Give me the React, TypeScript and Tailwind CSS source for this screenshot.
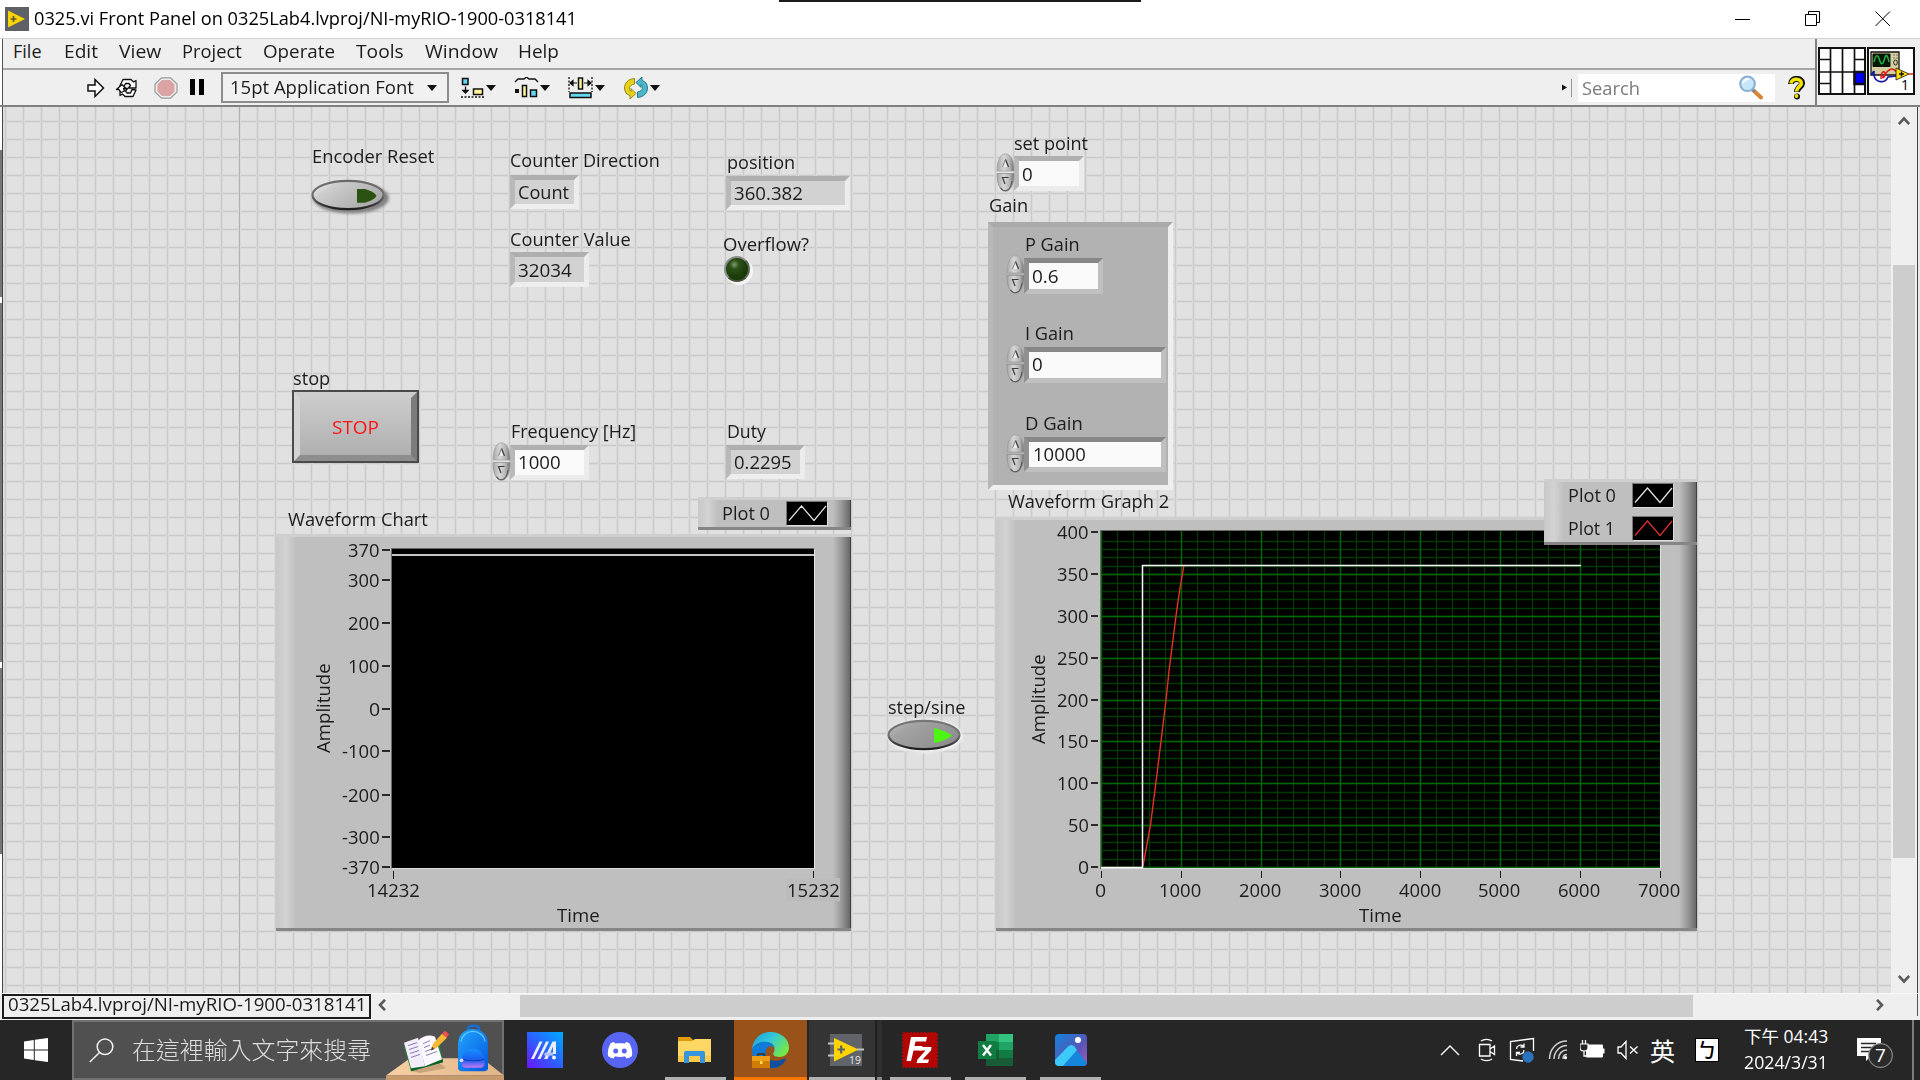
import { useLayoutEffect, useRef, useState, type ReactNode } from "react";

/** One line of text, squeezed or stretched horizontally to an exact width. */
function Fit({ w, className = "", children }: { w: number; className?: string; children: ReactNode }) {
  const ref = useRef<HTMLSpanElement>(null);
  const [scale, setScale] = useState(1);
  useLayoutEffect(() => {
    if (ref.current) setScale(w / ref.current.offsetWidth);
  }, [w]);
  return (
    <span className={`block whitespace-nowrap ${className}`} style={{ width: w }}>
      <span ref={ref} className="inline-block origin-left" style={{ transform: `scaleX(${scale})` }}>
        {children}
      </span>
    </span>
  );
}

type Item = { t: string; x: number; base: number; w: number; c?: string };

/** Canvas text: x is the left ink edge, base the baseline. */
function CanvasText({ t, x, base, w, c = "text-[#1c1c1c]" }: Item) {
  return (
    <div className={`absolute text-[18px] leading-[24px] ${c}`} style={{ left: x - 0.4, top: base - 19 }}>
      <Fit w={w + 1.4}>{t}</Fit>
    </div>
  );
}

const labels: Item[] = [
  { t: "Encoder Reset", x: 312, base: 163, w: 121 },
  { t: "Counter Direction", x: 510, base: 167, w: 148 },
  { t: "position", x: 727, base: 169, w: 67 },
  { t: "Counter Value", x: 510, base: 246, w: 119 },
  { t: "Overflow?", x: 723, base: 251, w: 85 },
  { t: "stop", x: 293, base: 385, w: 36 },
  { t: "Frequency [Hz]", x: 511, base: 438, w: 124 },
  { t: "Duty", x: 727, base: 438, w: 38 },
  { t: "Waveform Chart", x: 288, base: 526, w: 138 },
  { t: "step/sine", x: 888, base: 714, w: 76 },
  { t: "set point", x: 1014, base: 150, w: 73 },
  { t: "Gain", x: 989, base: 212, w: 38 },
  { t: "Waveform Graph 2", x: 1008, base: 508, w: 160 },
];

type Field = { x: number; y: number; w: number; h: number; v: string; vx: number; base: number; vw: number };

const indicators: Field[] = [
  { x: 510, y: 175, w: 69, h: 34, v: "Count", vx: 518, base: 199, vw: 50 },
  { x: 726, y: 176, w: 124, h: 34, v: "360.382", vx: 734, base: 200, vw: 67 },
  { x: 510, y: 252, w: 79, h: 35, v: "32034", vx: 518, base: 277, vw: 52 },
  { x: 726, y: 445, w: 79, h: 34, v: "0.2295", vx: 734, base: 469, vw: 56 },
];

const controls: Field[] = [
  { x: 510, y: 445, w: 79, h: 35, v: "1000", vx: 518, base: 469, vw: 41 },
  { x: 1014, y: 156, w: 70, h: 35, v: "0", vx: 1022, base: 181, vw: 9 },
];

const gains: (Field & { label: string; lw: number; lb: number })[] = [
  { label: "P Gain", lw: 53, lb: 251, x: 1024, y: 258, w: 79, h: 36, v: "0.6", vx: 1032, base: 283, vw: 25 },
  { label: "I Gain", lw: 47, lb: 340, x: 1024, y: 347, w: 142, h: 36, v: "0", vx: 1032, base: 371, vw: 9 },
  { label: "D Gain", lw: 56, lb: 430, x: 1024, y: 437, w: 142, h: 35, v: "10000", vx: 1033, base: 461, vw: 51 },
];

function Spinner({ x, y }: { x: number; y: number }) {
  return (
    <svg className="absolute h-[39px] w-[19px]" style={{ left: x, top: y }} viewBox="0 0 19 39">
      <defs>
        <linearGradient id="spin" x1="0" x2="1">
          <stop offset="0" stopColor="#a8a8a8" />
          <stop offset=".4" stopColor="#d6d6d6" />
          <stop offset=".75" stopColor="#b4b4b4" />
          <stop offset="1" stopColor="#6f6f6f" />
        </linearGradient>
      </defs>
      <path d="M1 18C1 8 4 .8 9.500.8S18 8 18 18Z" fill="url(#spin)" stroke="#999" strokeWidth=".6" />
      <path d="M1 20.500C1 31 4 38.200 9.500 38.200S18 31 18 20.500Z" fill="url(#spin)" stroke="#8d8d8d" strokeWidth=".7" />
      <path d="M16 28c-1 6-3 9.500-6.500 9.700c-2.500 0-4-1.500-5-3" fill="none" stroke="#555" strokeWidth="1.100" />
      <path d="M9.500 6.500L12.500 14H6.500Z" fill="#ececec" />
      <path d="M9.500 6.500L12.500 14" stroke="#3c3c3c" strokeWidth="1.300" />
      <path d="M6.500 14L9.500 6.500" stroke="#777" strokeWidth=".9" />
      <path d="M6.500 24.500H12.500L9.500 31Z" fill="#cfcfcf" />
      <path d="M12.500 24.500H6.500L9 31" fill="none" stroke="#3c3c3c" strokeWidth="1.200" />
    </svg>
  );
}

function Recess({ f, kind }: { f: Field; kind: "indicator" | "control" | "gain" }) {
  const look = {
    indicator: "border-t-[#afafaf] border-l-[#b9b9b9] border-r-[#ececec] border-b-[#eeeeee] bg-[#d2d2d2]",
    control: "border-t-[#b0b0b0] border-l-[#b9b9b9] border-r-[#ececec] border-b-[#ececec] bg-[#fafafa]",
    gain: "border-t-[#878787] border-l-[#919191] border-r-[#c0c0c0] border-b-[#c0c0c0] bg-[#fafafa]",
  }[kind];
  return (
    <>
      <div className={`absolute border-[5px] ${look}`} style={{ left: f.x, top: f.y, width: f.w, height: f.h }} />
      <CanvasText t={f.v} x={f.vx} base={f.base} w={f.vw} />
      {kind !== "indicator" && <Spinner x={f.x - 18} y={f.y - 3} />}
    </>
  );
}

function OvalButton({ on }: { on: boolean }) {
  const id = on ? "ovalOn" : "ovalOff";
  return (
    <svg className="h-[40px] w-[86px]" viewBox="0 0 86 40">
      <defs>
        <linearGradient id={id} x1="0" y1="0" x2="1" y2="0.6">
          <stop offset="0" stopColor={on ? "#c4c4c4" : "#f4f4f4"} />
          <stop offset=".3" stopColor={on ? "#a3a3a3" : "#cdcdcd"} />
          <stop offset="1" stopColor={on ? "#8e8e8e" : "#a9a9a9"} />
        </linearGradient>
        <linearGradient id={id + "Edge"} x1="0" y1="0" x2="0" y2="1">
          <stop offset="0" stopColor={on ? "#777" : "#6a6a6a"} />
          <stop offset=".5" stopColor="#707070" />
          <stop offset="1" stopColor="#1e1e1e" />
        </linearGradient>
        <filter id={id + "Blur"}>
          <feGaussianBlur stdDeviation="1.6" />
        </filter>
      </defs>
      {on ? (
        <ellipse cx="42" cy="20" rx="37.500" ry="16.500" fill="#f6f6f6" filter={`url(#${id}Blur)`} />
      ) : (
        <ellipse cx="44" cy="22" rx="38" ry="15.500" fill="#828282" filter={`url(#${id}Blur)`} />
      )}
      <ellipse cx="41" cy="19" rx="35.500" ry="14.200" fill={`url(#${id})`} stroke={`url(#${id}Edge)`} strokeWidth="2.200" />
      {on ? (
        <path d="M51 12C57 13 66 17 69 19.500C66 22.500 58 26 51 27Z" fill="#4cf512" />
      ) : (
        <path d="M50 13H57C62 13.500 68 17 69.500 19.700C68 23 62 26 57 26.800H50Z" fill="#2a5212" />
      )}
    </svg>
  );
}

/** Raised metal frame behind graphs and legends. */
function Frame({ x, y, w, h }: { x: number; y: number; w: number; h: number }) {
  return (
    <div
      className="absolute flex justify-between border-t-[3px] border-b-[3px] border-t-[#cfcfcf] border-b-[#868686] bg-[#bfbfbf]"
      style={{ left: x, top: y, width: w, height: h }}
    >
      <div className="w-[20px] bg-linear-to-r from-[#c8c8c8] via-[#d3d3d3] to-[#bfbfbf]" />
      <div className="w-[18px] border-r border-[#404040] bg-linear-to-r from-[#bfbfbf] via-[#999999] to-[#696969]" />
    </div>
  );
}

function Swatch({ x, y, color }: { x: number; y: number; color: string }) {
  return (
    <svg className="absolute h-[25px] w-[42px] border border-t-[#777] border-r-[#ddd] border-b-[#ddd] border-l-[#777] bg-black" style={{ left: x, top: y }} viewBox="0 0 40 23">
      <path d="M2 18.500L14.500 4L27 18.500L39 4" fill="none" stroke={color} strokeWidth="1.200" />
    </svg>
  );
}

function VerticalTitle({ x, y }: { x: number; y: number }) {
  return (
    <div className="absolute h-[24px] w-[90px] origin-top-left -rotate-90 text-[18px] leading-[24px] text-[#1c1c1c]" style={{ left: x, top: y }}>
      <Fit w={90}>Amplitude</Fit>
    </div>
  );
}

const chartY = [
  { v: "370", y: 550 },
  { v: "300", y: 580 },
  { v: "200", y: 623 },
  { v: "100", y: 666 },
  { v: "0", y: 709 },
  { v: "-100", y: 751 },
  { v: "-200", y: 795 },
  { v: "-300", y: 837 },
  { v: "-370", y: 867 },
];
const numberWidth = (v: string) => v.replace("-", "").length * 10.4 + (v.startsWith("-") ? 6.5 : 0) - 1;

function WaveformChart() {
  return (
    <>
      <Frame x={276} y={534} w={575} h={397} />
      <div className="absolute top-[548px] left-[391px] h-[321px] w-[424px] border-t border-r border-b border-l border-t-[#6b6b6b] border-r-[#e6e6e6] border-b-[#dedede] border-l-[#6b6b6b] bg-black pt-[5px]">
        <div className="h-[2px] bg-[#c4c4c4]" />
      </div>
      {chartY.map(({ v, y }) => (
        <div key={v}>
          <div className="absolute left-[382px] h-[2px] w-[8px] bg-[#2a2a2a]" style={{ top: y - 1 }} />
          <CanvasText t={v} x={379 - numberWidth(v)} base={y + 7} w={numberWidth(v)} />
        </div>
      ))}
      <div className="absolute top-[871px] left-[393px] h-[8px] w-px bg-[#1a1a1a]" />
      <div className="absolute top-[871px] left-[813px] h-[8px] w-px bg-[#1a1a1a]" />
      <CanvasText t="14232" x={367} base={897} w={51} />
      <div className="absolute top-[878px] left-[786px] h-[23px] w-[54px] bg-[#bcbcbc]" />
      <CanvasText t="15232" x={787} base={897} w={51} />
      <CanvasText t="Time" x={557} base={922} w={41} />
      <VerticalTitle x={311} y={753} />
      <Frame x={698} y={497} w={153} h={33} />
      <CanvasText t="Plot 0" x={722} base={520} w={47} />
      <Swatch x={786} y={501} color="#e8e8e8" />
    </>
  );
}

const range = (n: number) => Array.from({ length: n }, (_, i) => i);
const gx = (v: number) => Math.round(1101 + v * 0.0798) + 0.5 - 1100;
const gy = (v: number) => Math.round(867 - v * 0.8367) + 0.5 - 530;

function WaveformGraph() {
  return (
    <>
      <Frame x={996} y={517} w={701} h={414} />
      <svg className="absolute top-[530px] left-[1100px] h-[339px] w-[561px] bg-black" viewBox="0 0 561 339">
        {range(40).map((i) => (
          <path key={i} d={`M0 ${gy(i * 10)}H561`} stroke="#003a00" strokeWidth="1.300" />
        ))}
        {range(35).map((i) => (
          <path key={i} d={`M${gx(i * 200)} 0V338`} stroke="#003a00" strokeWidth="1.300" />
        ))}
        {range(8).map((i) => (
          <path key={i} d={`M0 ${gy(i * 50)}H561M${gx(i * 1000)} 0V338`} stroke="#006600" strokeWidth="1.400" />
        ))}
        <path d="M0 338.500H561" stroke="#d9d9d9" />
        <path d="M560.500 0V339" stroke="#dcdcdc" />
        <path d="M0 .5H561M.5 0V339" stroke="#6b6b6b" />
        <path d="M43 336L47 314L50.500 295L56.500 248L66 170L69 141L76.500 82L80 58L84 35" fill="none" stroke="#e8302c" strokeWidth="1.400" />
        <path d="M1 337.500H42.500V35.500H481" fill="none" stroke="#f8f8f8" strokeWidth="1.500" />
      </svg>
      {range(9).map((i) => {
        const v = String(i * 50);
        const y = Math.round(867 - i * 41.84);
        return (
          <div key={v}>
            <div className="absolute left-[1091px] h-[2px] w-[7px] bg-[#2a2a2a]" style={{ top: y - 1 }} />
            <CanvasText t={v} x={1088 - numberWidth(v)} base={y + 7} w={numberWidth(v)} />
          </div>
        );
      })}
      {range(8).map((i) => {
        const v = String(i * 1000);
        const x = 1101 + i * 79.8;
        return (
          <div key={v}>
            <div className="absolute top-[871px] h-[7px] w-px bg-[#1a1a1a]" style={{ left: Math.round(x) }} />
            <CanvasText t={v} x={x - numberWidth(v) / 2 - 1} base={897} w={numberWidth(v)} />
          </div>
        );
      })}
      <CanvasText t="Time" x={1359} base={922} w={41} />
      <VerticalTitle x={1026} y={744} />
      <Frame x={1544} y={479} w={153} h={66} />
      <CanvasText t="Plot 0" x={1568} base={502} w={47} />
      <Swatch x={1632} y={483} color="#e8e8e8" />
      <CanvasText t="Plot 1" x={1568} base={535} w={46} />
      <Swatch x={1632} y={516} color="#e03030" />
    </>
  );
}

function FrontPanel() {
  return (
    <div className="relative w-[1888px] overflow-hidden bg-[#e1e1e1]">
      <div className="absolute -top-[107px] -left-[3px] h-[1100px] w-[1920px]">
        <div className="absolute inset-0 bg-[linear-gradient(to_right,#dadada_1px,#cacaca_1px,#cacaca_2px,#dadada_2px,#dadada_3px,transparent_3px),linear-gradient(to_bottom,#dadada_1px,#cacaca_1px,#cacaca_2px,#dadada_2px,#dadada_3px,transparent_3px)] bg-[size:18px_18px] bg-[position:4px_12px]" />
        <div className="absolute top-0 left-[239px] h-full w-px bg-[#b2b2b2]" />

        {labels.map((l) => (
          <CanvasText key={l.t} {...l} />
        ))}
        {indicators.map((f) => (
          <Recess key={f.v} f={f} kind="indicator" />
        ))}
        {controls.map((f) => (
          <Recess key={f.v} f={f} kind="control" />
        ))}

        <div className="absolute top-[176px] left-[307px]">
          <OvalButton on={false} />
        </div>
        <div className="absolute top-[716px] left-[883px]">
          <OvalButton on />
        </div>

        <div className="absolute top-[257px] left-[725px] h-[28px] w-[28px] rounded-full bg-[#f4f4f4]" />
        <div className="absolute top-[256px] left-[724px] h-[26px] w-[26px] rounded-full border-2 border-[#8c8c8c] border-r-[#5c6a55] border-b-[#44523c] bg-[radial-gradient(circle_at_38%_30%,#7f9a72_0%,#2c5218_22%,#1d3f0b_55%,#123003_100%)]" />

        <div className="absolute top-[390px] left-[292px] flex h-[73px] w-[127px] items-stretch border-2 border-[#4a4a4a] bg-[#bdbdbd]">
          <div className="flex-1 border-[6px] border-t-[#cdcdcd] border-r-[#7c7c7c] border-b-[#8e8e8e] border-l-[#d3d3d3] bg-linear-to-b from-[#cbcbcb] to-[#b0b0b0]" />
        </div>
        <CanvasText t="STOP" x={332} base={434} w={46} c="text-[#ff1414]" />

        <div className="absolute top-[222px] left-[988px] h-[268px] w-[185px] border-[5px] border-t-[#aaaaaa] border-r-[#efefef] border-b-[#efefef] border-l-[#b8b8b8] bg-[#b2b2b2]" />
        {gains.map((g) => (
          <div key={g.label}>
            <CanvasText t={g.label} x={1025} base={g.lb} w={g.lw} />
            <Recess f={g} kind="gain" />
          </div>
        ))}

        <WaveformChart />
        <WaveformGraph />
      </div>
    </div>
  );
}

/* ---------- window chrome ---------- */

function TitleBar() {
  return (
    <div className="relative flex h-[38px] items-center bg-white pr-[29px] pl-[5px]">
      <div className="absolute top-0 left-[779px] h-[2px] w-[362px] bg-[#1b1b1b]" />
      <svg className="mb-px h-[24px] w-[24px]" viewBox="0 0 24 24">
        <path d="M0 0H24V24H0Z" fill="#5e6166" />
        <path d="M3 3.500L20 12L3 20.500Z" fill="#ffd400" />
        <path d="M5.500 12H11.500M8.500 9V15" stroke="#5b5a35" strokeWidth="1.700" />
      </svg>
      <Fit w={543} className="mb-[2px] ml-[5px] text-[18px] leading-[24px] text-black">
        0325.vi Front Panel on 0325Lab4.lvproj/NI-myRIO-1900-0318141
      </Fit>
      <div className="ml-auto flex items-center gap-[54px] text-black">
        <svg className="h-[16px] w-[16px]" viewBox="0 0 16 16">
          <path d="M0 8.500H15" stroke="currentColor" />
        </svg>
        <svg className="h-[16px] w-[16px]" viewBox="0 0 16 16" fill="none" stroke="currentColor">
          <path d="M.5 3.500H11.500V14.500H.5ZM3.500 3.500V.5H14.500V11.500H11.500" />
        </svg>
        <svg className="h-[16px] w-[16px]" viewBox="0 0 16 16" stroke="currentColor">
          <path d="M.5.5L15 15M15 .5L.5 15" />
        </svg>
      </div>
    </div>
  );
}

const menu = [
  { t: "File", w: 29, g: "ml-[10px]" },
  { t: "Edit", w: 34, g: "ml-[22px]" },
  { t: "View", w: 42, g: "ml-[21px]" },
  { t: "Project", w: 60, g: "ml-[21px]" },
  { t: "Operate", w: 72, g: "ml-[21px]" },
  { t: "Tools", w: 48, g: "ml-[21px]" },
  { t: "Window", w: 73, g: "ml-[21px]" },
  { t: "Help", w: 41, g: "ml-[20px]" },
];

const Caret = ({ className = "" }: { className?: string }) => (
  <svg className={`h-[6px] w-[10px] ${className}`} viewBox="0 0 10 6">
    <path d="M0 0H10L5 6Z" fill="#111" />
  </svg>
);

function Toolbar() {
  return (
    <div className="flex h-[35px] items-center pl-[84px]">
      <svg className="h-[22px] w-[18px]" viewBox="0 0 18 22">
        <path d="M1 8H8V2.500L16.500 11L8 19.500V14H1Z" fill="#fff" stroke="#111" strokeWidth="1.500" />
      </svg>
      <svg className="ml-[10px] h-[22px] w-[26px]" viewBox="0 0 26 22">
        <g fill="#fff" stroke="#111" strokeWidth="1.300" strokeLinejoin="round">
          <path d="M5 8.500L8 2.500H16L18.500 5L21 3.500V11H13.500L15.500 8.500L14 6.500H10.500L9 9.500Z" />
          <path d="M21 13L18 19.500H10L7.500 17L5 18.500V11.500H12.500L10.500 14L12 16H15.500L17 12.500Z" />
          <path d="M1.500 12.500L7 7.500L11 11.500H8.500L9.500 14L6 15.500L4 12.500Z" />
        </g>
      </svg>
      <svg className="ml-[13px] h-[22px] w-[24px]" viewBox="0 0 24 22">
        <path d="M7.500.8H16.500L23 7V15L16.500 21.200H7.500L1 15V7Z" fill="#ededed" stroke="#999" strokeWidth="1.200" />
        <path d="M8 3H16L20.500 7.500V14.500L16 19H8L3.500 14.500V7.500Z" fill="#dca3a4" />
      </svg>
      <div className="mb-[2px] ml-[12px] flex gap-[4px]">
        <div className="h-[16px] w-[5px] bg-black" />
        <div className="h-[16px] w-[5px] bg-black" />
      </div>
      <div className="ml-[17px] flex h-[31px] w-[228px] items-center justify-between border-2 border-[#8c8c8c] bg-[#f1f1f1] pr-[10px] pl-[7px]">
        <Fit w={184} className="mb-[2px] text-[18px] leading-[24px] text-[#1c1c1c]">
          15pt Application Font
        </Fit>
        <Caret />
      </div>
      <svg className="ml-[12px] h-[22px] w-[23px]" viewBox="0 0 23 22">
        <path d="M1.500 1.500H7V7.500H1.500Z" fill="#66d5ee" stroke="#111" strokeWidth="1.500" />
        <path d="M12.500 12H21.500V17.500H12.500Z" fill="#fff59b" stroke="#111" strokeWidth="1.500" />
        <path d="M4.500 9.500V15M2 13.500L4.500 16L7 13.500Z" stroke="#111" fill="#111" strokeWidth="1.300" />
        <path d="M0 20H23" stroke="#111" strokeWidth="1.600" strokeDasharray="2 1.500" />
      </svg>
      <Caret className="ml-[2px]" />
      <svg className="ml-[18px] h-[22px] w-[25px]" viewBox="0 0 25 22">
        <path d="M1 5L4 2H10L12.500 0L15 2H21L24 5" fill="none" stroke="#111" strokeWidth="1.400" />
        <path d="M1 12H5V16H1Z" fill="#111" />
        <path d="M8.500 8.500H12.500V19.500H8.500Z" fill="#fff59b" stroke="#111" strokeWidth="1.500" />
        <path d="M16.500 13H22.500V19.500H16.500Z" fill="#66d5ee" stroke="#111" strokeWidth="1.500" />
      </svg>
      <Caret className="ml-px" />
      <svg className="ml-[18px] h-[22px] w-[25px]" viewBox="0 0 25 22">
        <path d="M1 0V15M24 0V15" stroke="#111" strokeWidth="1.300" strokeDasharray="2 1.500" />
        <path d="M10.500 1H14.500V12H10.500Z" fill="#fff59b" stroke="#111" strokeWidth="1.500" />
        <path d="M2 6H9M16 6H23M5 3.500L2 6L5 8.500ZM20 3.500L23 6L20 8.500Z" stroke="#111" fill="#111" strokeWidth="1.200" />
        <path d="M2 16H23V20.500H2Z" fill="#66d5ee" stroke="#111" strokeWidth="1.500" />
      </svg>
      <Caret className="ml-[2px]" />
      <svg className="ml-[18px] h-[24px] w-[26px]" viewBox="0 0 26 24">
        <path d="M11.500 2.500C5 3 1.500 7 1.500 12C1.500 16 3.500 18.500 7 19.500V23L13 17.500L8 12.500V15.500C5.500 13.500 6 9 11.500 8Z" fill="#e6d21c" stroke="#8b7d10" strokeWidth=".9" />
        <path d="M14.500 21.500C21 21 24.500 17 24.500 12C24.500 8 22.500 5.500 19 4.500V1L13 6.500L18 11.500V8.500C20.500 10.500 20 15 14.500 16Z" fill="#4bb5c9" stroke="#1d6f80" strokeWidth=".9" />
      </svg>
      <Caret className="ml-px" />

      <div className="ml-auto flex items-center">
        <svg className="h-[20px] w-[10px]" viewBox="0 0 10 20">
          <path d="M0 6.500L5 9.500L0 12.500Z" fill="#111" />
          <path d="M9.500 1V19" stroke="#999" />
        </svg>
        <div className="ml-[6px] flex h-[28px] w-[197px] items-center justify-between bg-white pr-[11px] pl-[4px]">
          <Fit w={58} className="text-[18px] leading-[24px] text-[#7b7b7b]">
            Search
          </Fit>
          <svg className="h-[25px] w-[26px]" viewBox="0 0 26 25">
            <path d="M15 15L23 22.500" stroke="#d98436" strokeWidth="4" strokeLinecap="round" />
            <path d="M14 14L17 17" stroke="#7d8a99" strokeWidth="2.500" />
            <circle cx="9.500" cy="8.800" r="7.300" fill="#c7e6fa" stroke="#88aed0" strokeWidth="2" />
            <path d="M5 8C6 5 8 4 11 4" stroke="#fff" strokeWidth="2" fill="none" />
          </svg>
        </div>
        <svg className="mr-[10px] ml-[13px] h-[24px] w-[17px]" viewBox="0 0 17 24">
          <path d="M3 8C3 1 14.500 1.500 14 7.500C13.500 11 9 11.500 9 16" fill="none" stroke="#111" strokeWidth="6" />
          <circle cx="9" cy="20.500" r="3" fill="#111" />
          <path d="M3 7.500C3.500 1.500 13.800 2 13.300 7.500C13 10.500 8.500 11 8.500 15.500" fill="none" stroke="#f5e400" strokeWidth="3.600" />
          <circle cx="8.500" cy="20" r="1.900" fill="#f5e400" />
        </svg>
      </div>
    </div>
  );
}

function ConnectorPane() {
  return (
    <div className="flex h-[66px] w-[105px] shrink-0 gap-px border-l-2 border-[#808080] pt-[8px] pl-px">
      <svg className="h-[48px] w-[48px]" viewBox="0 0 48 48">
        <path d="M1 1H47V47H1Z" fill="#fff" stroke="#111" strokeWidth="2" />
        <path d="M12.500 1V47M24.500 1V47M36.500 1V47M1 12.500H12.500M36.500 12.500H47M1 25H47M1 36.500H12.500M36.500 36.500H47" stroke="#111" strokeWidth="1.700" />
        <path d="M36.500 25H47V37H36.500Z" fill="#0000ff" stroke="#111" strokeWidth="2.500" />
      </svg>
      <div className="relative h-[48px] w-[48px] border-2 border-[#111] bg-white">
        <svg className="h-[44px] w-[44px]" viewBox="0 0 44 44">
          <path d="M2 3H30V26H2Z" fill="#d5cfa0" stroke="#111" strokeWidth="1.300" />
          <path d="M4 5H21V17.500H4Z" fill="#001800" stroke="#111" />
          <path d="M5 13C7 4 9 6 10.500 11S14 16 15.500 10S18.500 6 20 13" fill="none" stroke="#27b04b" strokeWidth="1.500" />
          <path d="M24 6H29M24 9H29" stroke="#777" strokeDasharray="2 1" />
          <ellipse cx="26.500" cy="13.500" rx="1.800" ry="2.500" fill="none" stroke="#222" />
          <path d="M2 26L5 22M5 22V26C6 34 16 35 19 28L28 27" fill="none" stroke="#1717a0" strokeWidth="1.700" />
          <path d="M12 30C12 20 17 22 16 26S11 30 17 24S24 20 28 23" fill="none" stroke="#e01818" strokeWidth="1.500" />
          <path d="M27 19L40 25L27 31Z" fill="#ffe000" stroke="#111" strokeWidth=".8" />
          <path d="M30 25H35M32.500 22.500V27.500" stroke="#111" strokeWidth="1.400" />
          <path d="M40 25H44" stroke="#e01818" strokeWidth="1.400" />
        </svg>
        <span className="absolute right-[4px] bottom-[-1px] text-[14px] leading-[18px] text-black">1</span>
      </div>
    </div>
  );
}

function Chevron({ d }: { d: string }) {
  return (
    <svg className="h-[12px] w-[12px]" viewBox="0 0 12 12">
      <path d={d} fill="none" stroke="#5a5a5a" strokeWidth="2.600" />
    </svg>
  );
}

function BottomBar() {
  return (
    <div className="flex h-[27px] border-t border-[#f8f8f8] bg-[#efefef] pl-[2px]">
      <div className="h-[25px] w-[369px] border-2 border-[#1c1c1c] bg-[#efefef] pl-[4px]">
        <Fit w={358} className="text-[18px] leading-[17px] text-[#1c1c1c]">
          0325Lab4.lvproj/NI-myRIO-1900-0318141
        </Fit>
      </div>
      <div className="flex w-[149px] items-center pb-[4px] pl-[5px]">
        <Chevron d="M9 .8L4 6L9 11.200" />
      </div>
      <div className="mt-px h-[22px] w-[1173px] bg-[#cdcdcd]" />
      <div className="flex flex-1 items-center justify-end pr-[31px] pb-[4px]">
        <Chevron d="M3 .8L8 6L3 11.200" />
      </div>
      <div className="mb-[4px] w-px bg-[#555]" />
      <div className="w-[2px]" />
    </div>
  );
}

/* ---------- taskbar ---------- */

function SearchArt() {
  return (
    <svg className="h-[58px] w-[120px]" viewBox="384 1021 120 59" preserveAspectRatio="none">
      <defs>
        <linearGradient id="desk" x1="0" x2="1">
          <stop offset="0" stopColor="#f7d0a4" />
          <stop offset="1" stopColor="#e0b588" />
        </linearGradient>
        <linearGradient id="bag" x1="0" x2="1" y1="0" y2="1">
          <stop offset="0" stopColor="#22a6ff" />
          <stop offset="1" stopColor="#0557dd" />
        </linearGradient>
        <linearGradient id="pocket" x1="0" x2="0" y1="0" y2="1">
          <stop offset="0" stopColor="#1590ff" />
          <stop offset=".6" stopColor="#1c5cf0" />
          <stop offset="1" stopColor="#c479f5" />
        </linearGradient>
      </defs>
      <path d="M386 1075.500L410 1058H482L504 1075.500Z" fill="url(#desk)" />
      <path d="M386 1075.500H504V1080H386Z" fill="#c79a6c" />
      <path d="M412 1071L440 1063L446 1068L420 1073Z" fill="#caa27c" />
      <path d="M404 1045L411 1071L443 1062L439 1041Z" fill="#1b8a3d" />
      <path d="M411 1068L443 1059V1062L411 1071Z" fill="#0e6127" />
      <path d="M404 1042L418 1037L425 1066L411 1068Z" fill="#f2ecfb" />
      <path d="M418 1040C424 1034 430 1034 435 1036L442 1059L425 1066Z" fill="#fbf8ff" />
      <path d="M408 1045L417 1042M409 1049L418 1046M410 1053L419 1050M411 1057L420 1054M423 1043L430 1040M424 1047L430 1044.500M425 1051L436 1047M426 1055L437 1051" stroke="#8a7bb0" strokeWidth="1" />
      <path d="M431 1050L433 1043L442 1033L447 1037L437 1047Z" fill="#f9b934" />
      <path d="M442 1033L445 1030L449 1033.500L446.500 1037Z" fill="#ef5350" />
      <path d="M431 1050L432 1046L434.500 1048.500Z" fill="#5d4037" />
      <path d="M468 1030V1027C469 1024 478 1024 479 1027V1030" fill="none" stroke="#1270d8" strokeWidth="2.500" />
      <path d="M458 1068V1043C458 1023 488 1023 488 1043V1068C488 1070 486 1071 484 1071H462C460 1071 458 1070 458 1068Z" fill="url(#bag)" />
      <path d="M461 1041C463 1027 483 1027 485 1041" fill="none" stroke="#5ccaff" strokeWidth="1.200" />
      <path d="M462 1060C462 1044 484 1044 484.500 1060V1064C484 1067 482 1067.500 480 1067.500H466C464 1067.500 462 1067 462 1064Z" fill="url(#pocket)" />
      <path d="M462 1059C470 1061 478 1061 484 1059" fill="none" stroke="#0a3fb0" strokeWidth="1" />
      <circle cx="461.500" cy="1060" r="1.900" fill="#e4d7ff" />
    </svg>
  );
}

function AppSlot({ w, className = "", bar = "", children }: { w: string; className?: string; bar?: string; children?: ReactNode }) {
  return (
    <div className={`relative flex h-[60px] items-center justify-center ${w} ${className}`}>
      {children}
      {bar && <div className={`absolute bottom-0 h-[3px] ${bar}`} />}
    </div>
  );
}

function TaskbarApps() {
  return (
    <div className="flex">
      <AppSlot w="w-[81px]">
        <svg className="h-[36px] w-[36px]" viewBox="0 0 36 36">
          <defs>
            <linearGradient id="ma" x1="0" y1="1" x2="1" y2="0">
              <stop offset="0" stopColor="#6a14ff" />
              <stop offset=".5" stopColor="#2b62ff" />
              <stop offset="1" stopColor="#00aaff" />
            </linearGradient>
          </defs>
          <path d="M0 0H36V36H0Z" fill="url(#ma)" />
          <path d="M4 27L12.500 9.500H15.500L7 27ZM10.500 27L19 9.500H22L13.500 27Z" fill="#e9eeff" />
          <path d="M17 27L25.500 9.500H29V22H26V14.500L20.500 27Z" fill="#e9eeff" />
          <path d="M18 20.500H26V23.500H17Z" fill="#b6c6ff" />
          <circle cx="27" cy="25.500" r="1.900" fill="#fff" />
        </svg>
      </AppSlot>
      <AppSlot w="w-[70px]">
        <svg className="h-[36px] w-[36px]" viewBox="0 0 36 36">
          <circle cx="18" cy="18" r="18" fill="#5865f2" />
          <path d="M12 10C10 10.400 9 11 8.500 11.500C6 16 5.500 20 6 24C8 25.500 10 26.200 11.500 26.500L13 24.200C16 25.200 20 25.200 23 24.200L24.500 26.500C26 26.200 28 25.500 30 24C30.500 20 30 16 27.500 11.500C27 11 26 10.400 24 10L23 11.500C20 11 16 11 13 11.500Z" fill="#fff" />
          <circle cx="13.700" cy="19" r="2.500" fill="#5865f2" />
          <circle cx="22.300" cy="19" r="2.500" fill="#5865f2" />
        </svg>
      </AppSlot>
      <AppSlot w="w-[79px]" bar="left-[10px] w-[61px] bg-[#b1b1b1]">
        <svg className="h-[28px] w-[33px]" viewBox="0 0 33 28">
          <path d="M0 1H12L15 4V8H0Z" fill="#e19a0b" />
          <path d="M0 5H14L17 3H33V26H0Z" fill="#ffd765" />
          <path d="M0 20H33V26H0Z" fill="#fbc94a" />
          <path d="M6 27V17C6 15.500 7 15 8 15H25C26 15 27 15.500 27 17V27H22V20H11V27Z" fill="#3795de" />
        </svg>
      </AppSlot>
      <AppSlot w="w-[73px]" className="bg-[#9a521b]" bar="left-0 w-full bg-[#ff7600]">
        <svg className="h-[36px] w-[37px]" viewBox="0 0 37 36">
          <defs>
            <linearGradient id="edgeTop" x1="0" x2="1" y1="0" y2=".6">
              <stop offset="0" stopColor="#1b9de2" />
              <stop offset=".5" stopColor="#33c8d8" />
              <stop offset="1" stopColor="#74e848" />
            </linearGradient>
          </defs>
          <path d="M0 18C1 6 9 0 18.500 0C29 0 37 7 37 15.500C37 22 32 25 27.500 25C22 25 20.500 23 21.500 21C24 17 22 11 15 10C8 9.500 2 13 0 18Z" fill="url(#edgeTop)" />
          <path d="M0 18C2 11 10 9 15 10C19 10.500 22 13 22.500 16C20 13 15 14 14 18C12 25 18 33 27 35C12 39 0 30 0 18Z" fill="#0f7bd6" />
          <path d="M14 18C11 26 20 30 26 28.500C30 27.500 33 26 34 26.500C33 31 28 36 19 36C14 33 12 25 14 18Z" fill="#0b4f9e" />
          <path d="M0 24H18V36H0Z" fill="#d07c06" />
          <path d="M0 24H18V29H0Z" fill="#ee9f17" />
          <path d="M6 24V22H12V24" fill="none" stroke="#4b2c02" strokeWidth="1.500" />
          <path d="M8 29H10.500V32H8Z" fill="#ffe14d" />
        </svg>
      </AppSlot>
      <AppSlot w="w-[66px]" className="ml-[2px] bg-[#343434]" bar="left-0 w-[66px] bg-[#b1b1b1]">
        <svg className="mr-[-8px] h-[34px] w-[38px]" viewBox="0 0 38 34">
          <path d="M3 1H35V33H3Z" fill="#606468" />
          <path d="M1 10.500H8M1 22.500H8M30 16.500H37" stroke="#bfc4c8" strokeWidth="2.200" />
          <path d="M7 5L31.500 16.500L7 28.500Z" fill="#ffd400" />
          <path d="M10.500 16.500H18M14.200 12.500V20.500" stroke="#5d6166" strokeWidth="2.200" />
          <text x="22" y="31" fontSize="10.500" fill="#e6e6e6">
            19
          </text>
        </svg>
      </AppSlot>
      <AppSlot w="w-[7px]" className="border-l-2 border-[#202020] bg-[#2e2e2e]" bar="left-0 w-[5px] bg-[#8a8a8a]" />
      <AppSlot w="w-[76px]" bar="left-[8px] w-[61px] bg-[#b1b1b1]">
        <svg className="h-[36px] w-[36px]" viewBox="0 0 36 36">
          <path d="M1 1H35V35H1Z" fill="#b40505" stroke="#b40505" strokeWidth="2" strokeDasharray="2 1.500" />
          <path d="M9 5H25L24 9.500H13.500L12.500 14H20.500L19.500 18.500H11.500L9 29H4.500Z" fill="#fff" />
          <path d="M17.500 15H29.500L29 18.500L20.500 27.500H27L26 31H14.500L15.500 27.500L23.500 18.500H17Z" fill="#fff" />
        </svg>
      </AppSlot>
      <AppSlot w="w-[75px]" bar="left-[7px] w-[61px] bg-[#b1b1b1]">
        <svg className="h-[32px] w-[35px]" viewBox="0 0 35 32">
          <path d="M8 0H21V8H8Z" fill="#21a366" />
          <path d="M21 0H35V8H21Z" fill="#33c481" />
          <path d="M8 8H21V16H8Z" fill="#107c41" />
          <path d="M21 8H35V16H21Z" fill="#21a366" />
          <path d="M8 16H35V32H8Z" fill="#185c37" />
          <path d="M21 16H35V24H21Z" fill="#107c41" />
          <path d="M0 7H18V25H0Z" fill="#107c41" />
          <path d="M5 11L13 21.500M13 11L5 21.500" stroke="#fff" strokeWidth="2.400" />
        </svg>
      </AppSlot>
      <AppSlot w="w-[75px]" bar="left-[7px] w-[61px] bg-[#b1b1b1]">
        <svg className="h-[32px] w-[32px]" viewBox="0 0 32 32">
          <defs>
            <linearGradient id="ph" x1="0" x2="1" y1="0" y2="1">
              <stop offset="0" stopColor="#1283dc" />
              <stop offset=".6" stopColor="#5a55b6" />
              <stop offset="1" stopColor="#a45cc0" />
            </linearGradient>
            <clipPath id="phc">
              <rect width="32" height="32" rx="4" />
            </clipPath>
          </defs>
          <g clipPath="url(#phc)">
            <path d="M0 0H32V32H0Z" fill="url(#ph)" />
            <path d="M5 32L18 18C20 16.500 22 17 23.500 18.500L34 31V34H5Z" fill="#1586dc" />
            <path d="M-2 28L13 12.500C15 10.500 17.500 10.500 19.500 12.500L22 16L7 33H-2Z" fill="#3ccbf8" />
            <circle cx="23" cy="6" r="3" fill="#fff" />
          </g>
        </svg>
      </AppSlot>
    </div>
  );
}

function Tray() {
  return (
    <div className="flex h-[60px] items-center text-white">
      <svg className="h-[12px] w-[20px]" viewBox="0 0 20 12">
        <path d="M1 11L10 2L19 11" fill="none" stroke="#fff" strokeWidth="1.400" />
      </svg>
      <svg className="ml-[18px] h-[24px] w-[18px]" viewBox="0 0 18 24" fill="none" stroke="#fff" strokeWidth="1.300">
        <path d="M1.500 6.500H12V18H1.500ZM12 11L16.500 8V16.500L12 13.500M3 3C6 .8 11 .8 14 3M3 21C6 23.200 11 23.200 14 21" />
      </svg>
      <svg className="ml-[13px] h-[26px] w-[26px]" viewBox="0 0 26 26" fill="none" stroke="#fff" strokeWidth="1.300">
        <path d="M14 24L1.500 22.500V4.500L24.500 1.500V14" />
        <path d="M7.500 12C7.500 8.500 12 7 14.500 9.500M15 6.500V10H11.500M15 13C15 16.500 11 18.500 8 16M7.500 19V15.500H11" />
        <circle cx="19" cy="20" r="5.700" fill="#2a72bd" stroke="none" />
      </svg>
      <svg className="ml-[13px] h-[22px] w-[20px]" viewBox="0 0 20 22" fill="none" stroke="#cfcfcf" strokeWidth="1.500">
        <path d="M1.500 20C1.500 10 9 2 19 2M6 20C6 12.500 12 6.500 19 6.500M10.500 20C10.500 15 14 11 19 11" />
        <path d="M15 20C15 17 17 15.500 19 15.500" />
        <circle cx="17.500" cy="18.700" r="1.600" fill="#fff" stroke="none" />
      </svg>
      <svg className="ml-[12px] h-[20px] w-[25px]" viewBox="0 0 25 20">
        <path d="M6.500 5H22.500V17H6.500Z" fill="#fff" stroke="#fff" />
        <path d="M22.500 8.500H24.500V13.500H22.500Z" fill="#fff" />
        <path d="M0 4H8V8C8 10 6 11 4 11S0 10 0 8Z" fill="#262626" stroke="#fff" strokeWidth="1.200" />
        <path d="M2.500 4V0M5.500 4V0M4 11V16H7" stroke="#fff" strokeWidth="1.300" fill="none" />
      </svg>
      <svg className="ml-[12px] h-[20px] w-[22px]" viewBox="0 0 22 20" fill="none" stroke="#fff" strokeWidth="1.300">
        <path d="M1 7H4L9 1.500V18.500L4 13H1ZM13 6.500L20.500 13.500M20.500 6.500L13 13.500" />
      </svg>
      <span className="ml-[11px] font-['Noto_Sans_CJK_TC',sans-serif] text-[25px] leading-[30px]">英</span>
      <span className="ml-[20px] flex h-[24px] w-[24px] items-center justify-center border border-black bg-white font-['Noto_Sans_CJK_TC',sans-serif] text-[20px] leading-[22px] font-medium text-black">
        ㄅ
      </span>
      <div className="mb-[2px] ml-[25px] flex w-[84px] flex-col gap-[2px] font-['Open_Sans','Noto_Sans_CJK_TC',sans-serif] text-[17.500px] leading-[24px]">
        <Fit w={84}>下午 04:43</Fit>
        <Fit w={84}>2024/3/31</Fit>
      </div>
      <div className="relative ml-[29px] h-[36px] w-[37px]">
        <svg className="h-[36px] w-[37px]" viewBox="0 0 37 36">
          <path d="M0 6H24V24H14L9 29V24H0Z" fill="#fff" />
          <path d="M4 11.500H19M4 15.500H19M4 19.500H13" stroke="#262626" strokeWidth="1.300" />
          <circle cx="23.500" cy="23.500" r="11.800" fill="#2b2b2b" stroke="#8b8b8b" strokeWidth="1.200" />
        </svg>
        <span className="absolute top-[11px] left-[18px] text-[19px] leading-[24px] font-medium">7</span>
      </div>
      <div className="ml-[18px] h-[60px] w-[2px] bg-[#7c7c7c]" />
      <div className="w-[6px]" />
    </div>
  );
}

function Taskbar() {
  return (
    <div className="flex h-[60px] bg-[#262626]">
      <div className="flex w-[72px] items-center justify-center">
        <svg className="h-[24px] w-[24px]" viewBox="0 0 24 24" fill="#fff">
          <path d="M0 3.400L9.800 2V11.500H0ZM10.800 1.800L24 0V11.500H10.800ZM0 12.500H9.800V22L0 20.600ZM10.800 12.500H24V24L10.800 22.200Z" />
        </svg>
      </div>
      <div className="flex w-[432px] items-center border-2 border-[#717171] bg-[#505050] pl-[15px]">
        <svg className="h-[25px] w-[25px]" viewBox="0 0 25 25" fill="none" stroke="#f2f2f2" strokeWidth="1.500">
          <circle cx="16" cy="8.800" r="7.800" />
          <path d="M10.500 14.500L.8 24" />
        </svg>
        <Fit w={239} className="mb-[2px] ml-[18px] font-['Noto_Sans_CJK_TC',sans-serif] text-[23.800px] leading-[30px] font-light text-[#dedede]">
          在這裡輸入文字來搜尋
        </Fit>
        <div className="mr-[-2px] mb-[-2px] ml-auto">
          <SearchArt />
        </div>
      </div>
      <TaskbarApps />
      <div className="flex-1" />
      <Tray />
    </div>
  );
}

export default function App() {
  return (
    <div className="flex h-[1080px] w-[1920px] flex-col overflow-hidden bg-[#efefef] font-['Open_Sans','Noto_Sans',sans-serif]">
      <div className="flex h-[1020px] flex-col">
        <TitleBar />
        <div className="flex h-[69px] border-t border-b-2 border-t-[#d2d2d2] border-b-[#808080] bg-[#efefef]">
          <div className="w-[3px] border-r border-[#555] bg-white" />
          <div className="flex-1">
            <div className="flex h-[31px] items-start border-b-2 border-[#a6a6a6] text-[18px] leading-[24px] text-[#1c1c1c]">
              {menu.map((m) => (
                <Fit key={m.t} w={m.w} className={m.g}>
                  {m.t}
                </Fit>
              ))}
            </div>
            <Toolbar />
          </div>
          <ConnectorPane />
        </div>
        <div className="flex h-[886px]">
          <div className="flex w-[3px] flex-col gap-[6px] border-r border-[#444] bg-white pt-[43px]">
            <div className="h-[147px] bg-[#777]" />
            <div className="h-[359px] bg-[#777]" />
            <div className="h-[186px] bg-[#777]" />
          </div>
          <FrontPanel />
          <div className="flex w-[26px] flex-col items-center bg-[#efefef] pt-[8px]">
            <Chevron d="M.8 9L6 3.500L11.200 9" />
            <div className="mt-[138px] h-[593px] w-[22px] bg-[#cdcdcd]" />
            <div className="mt-[115px]">
              <Chevron d="M.8 3L6 8.500L11.200 3" />
            </div>
          </div>
          <div className="w-[3px] border-l border-[#444] bg-[#e9e9e9]" />
        </div>
        <BottomBar />
      </div>
      <Taskbar />
    </div>
  );
}
